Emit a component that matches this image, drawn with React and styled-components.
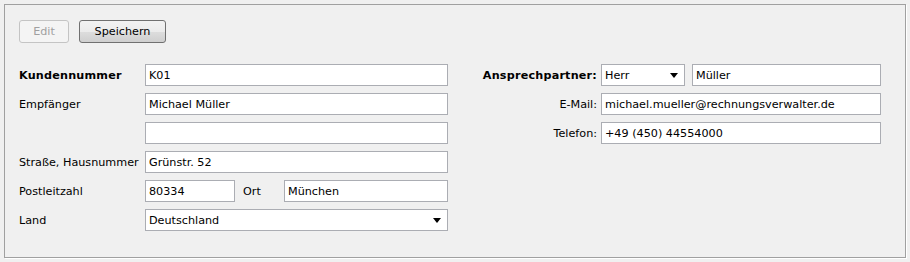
import React from 'react'
import styled, { createGlobalStyle } from 'styled-components'

const GlobalStyle = createGlobalStyle`
    html, body {
        margin: 0;
        padding: 0;
        background: #f0f0f0;
    }
    body {
        font-family: "DejaVu Sans", "Liberation Sans", sans-serif;
        font-size: 11.2px;
        color: #000;
    }
`

const Page = styled.div`
    padding: 4px;
    width: 910px;
    height: 262px;
    box-sizing: border-box;
`
const Panel = styled.div`
    height: 254px;
    box-sizing: border-box;
    border: 1px solid #a0a0a0;
    box-shadow: 1px 1px 0 #ffffff;
    background: #f0f0f0;
    padding: 15px 14px;
`
const Toolbar = styled.div`
    display: flex;
    gap: 10px;
`
const Button = styled.button`
    height: 23px;
    width: ${p => p.w}px;
    box-sizing: border-box;
    font-family: inherit;
    font-size: 11.2px;
    padding: 0;
    border-radius: 3px;
    border: 1px solid ${p => (p.disabled ? '#c4c4c4' : '#707070')};
    color: ${p => (p.disabled ? '#a0a0a0' : '#000')};
    background: ${p => (p.disabled ? '#f4f4f4' : 'linear-gradient(#f2f2f2 0%, #ebebeb 50%, #dddddd 51%, #cfcfcf 100%)')};
`
const Form = styled.div`
    display: flex;
    align-items: flex-start;
    margin-top: 21px;
`
const Column = styled.div`
    display: grid;
    grid-template-columns: ${p => p.cols};
    column-gap: ${p => p.gap}px;
    row-gap: 7px;
    margin-left: ${p => p.offset || 0}px;
    align-items: center;
    flex: none;
`
const Label = styled.div`
    font-weight: ${p => (p.bold ? 'bold' : 'normal')};
    letter-spacing: ${p => (p.bold ? '0.2px' : 'normal')};
    text-align: ${p => (p.right ? 'right' : 'left')};
    white-space: nowrap;
`
const Input = styled.input`
    width: ${p => (p.w ? `${p.w}px` : '100%')};
    height: 22px;
    box-sizing: border-box;
    border: 1px solid #abadb3;
    background: #fff;
    font-family: inherit;
    font-size: 11.2px;
    padding: 0 3px;
    margin: 0;
    margin-left: ${p => p.ml || 0}px;
    color: #000;
    outline: none;
    flex: none;
`
const Combo = styled.div`
    width: ${p => (p.w ? `${p.w}px` : '100%')};
    height: 22px;
    box-sizing: border-box;
    border: 1px solid #abadb3;
    background: #fff;
    display: flex;
    align-items: center;
    justify-content: space-between;
    padding: 0 6px 0 3px;
    flex: none;
`
const Arrow = styled.span`
    width: 0;
    height: 0;
    border-left: 4.5px solid transparent;
    border-right: 4.5px solid transparent;
    border-top: 5px solid #000;
`
const Inline = styled.div`
    display: flex;
    align-items: center;
`
const OrtLabel = styled.div`
    width: 49px;
    padding-left: 8px;
    box-sizing: border-box;
    flex: none;
`
const Spacer = styled.div``

function App() {
    return (
        <Page>
            <GlobalStyle />
            <Panel>
                <Toolbar>
                    <Button w={50} disabled>Edit</Button>
                    <Button w={87}>Speichern</Button>
                </Toolbar>
                <Form>
                    <Column cols="126px 303px" gap={0}>
                        <Label bold>Kundennummer</Label>
                        <Input readOnly value="K01" />
                        <Label>Empfänger</Label>
                        <Input readOnly value="Michael Müller" />
                        <Spacer />
                        <Input readOnly value="" />
                        <Label>Straße, Hausnummer</Label>
                        <Input readOnly value="Grünstr. 52" />
                        <Label>Postleitzahl</Label>
                        <Inline>
                            <Input w={90} readOnly value="80334" />
                            <OrtLabel>Ort</OrtLabel>
                            <Input w={164} readOnly value="München" />
                        </Inline>
                        <Label>Land</Label>
                        <Combo>
                            <span>Deutschland</span>
                            <Arrow />
                        </Combo>
                    </Column>
                    <Column cols="120px 280px" gap={4} offset={29}>
                        <Label bold right>Ansprechpartner:</Label>
                        <Inline>
                            <Combo w={84}>
                                <span>Herr</span>
                                <Arrow />
                            </Combo>
                            <Input w={189} ml={7} readOnly value="Müller" />
                        </Inline>
                        <Label right>E-Mail:</Label>
                        <Input readOnly value="michael.mueller@rechnungsverwalter.de" />
                        <Label right>Telefon:</Label>
                        <Input readOnly value="+49 (450) 44554000" />
                    </Column>
                </Form>
            </Panel>
        </Page>
    )
}

export default App
